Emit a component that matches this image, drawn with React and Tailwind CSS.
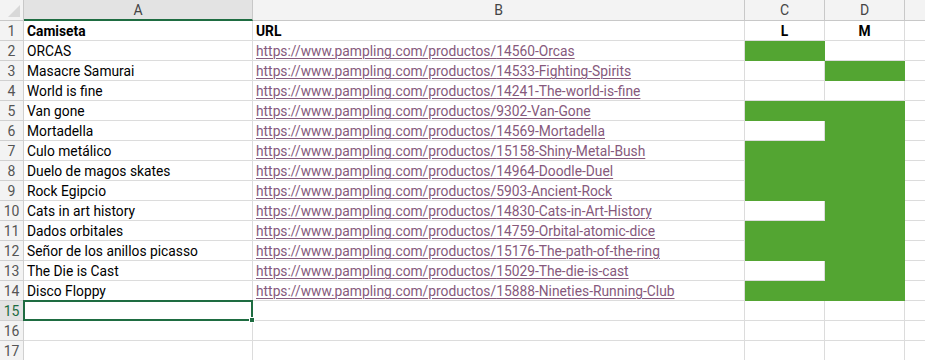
import React from 'react';

const rows = [
  ['ORCAS', '14560-Orcas', true, false],
  ['Masacre Samurai', '14533-Fighting-Spirits', false, true],
  ['World is fine', '14241-The-world-is-fine', false, false],
  ['Van gone', '9302-Van-Gone', true, true],
  ['Mortadella', '14569-Mortadella', false, true],
  ['Culo metálico', '15158-Shiny-Metal-Bush', true, true],
  ['Duelo de magos skates', '14964-Doodle-Duel', true, true],
  ['Rock Egipcio', '5903-Ancient-Rock', true, true],
  ['Cats in art history', '14830-Cats-in-Art-History', false, true],
  ['Dados orbitales', '14759-Orbital-atomic-dice', true, true],
  ['Señor de los anillos picasso', '15176-The-path-of-the-ring', true, true],
  ['The Die is Cast', '15029-The-die-is-cast', false, true],
  ['Disco Floppy', '15888-Nineties-Running-Club', true, true],
];

const cell = 'h-5 border-r border-b border-[#dcdcdc] px-[3px] flex items-end pb-[1px] leading-[16px] overflow-hidden whitespace-nowrap';
const rowHead = 'h-5 border-r border-b border-[#d0d0d0] bg-[#f3f3f3] text-[#555] flex items-end justify-center pb-[1px] leading-[16px] text-[14px]';
const colHead = 'h-[21px] border-r border-b border-[#c8c8c8] bg-[#f3f3f3] flex items-center justify-center text-[#444] text-[14px] leading-[16px]';

function Green({ on }) {
  return on ? (
    <div className="h-5 bg-[#53a532] border-r border-b border-[#53a532]" />
  ) : (
    <div className="h-5 border-r border-b border-[#dcdcdc]" />
  );
}

export default function App() {
  return (
    <div className="w-[925px] h-[360px] overflow-hidden bg-white text-[13.8px] text-black" style={{ fontFamily: 'Roboto, "Liberation Sans", sans-serif' }}>
      <div className="grid grid-cols-[24px_229px_492px_80px_80px_1fr]">
        {/* column headers */}
        <div className="h-[21px] border-r border-b border-[#c8c8c8] bg-[#f3f3f3] relative">
          <svg className="absolute right-[3px] bottom-[3px]" width="12" height="12" viewBox="0 0 12 12">
            <polygon points="12,0 12,12 0,12" fill="#d8d8d8" />
          </svg>
        </div>
        <div className="h-[21px] border-r border-[#c8c8c8] bg-[#e3e3e3] border-b-2 border-b-[#1e6c41] flex items-center justify-center text-[#444] text-[14px] leading-[16px]">A</div>
        <div className={colHead}>B</div>
        <div className={colHead}>C</div>
        <div className={colHead}>D</div>
        <div className="h-[21px] border-b border-[#c8c8c8] bg-[#f3f3f3]" />

        {/* row 1 */}
        <div className={rowHead}>1</div>
        <div className={cell + ' font-bold'}>Camiseta</div>
        <div className={cell + ' font-bold'}>URL</div>
        <div className={cell + ' font-bold justify-center'}>L</div>
        <div className={cell + ' font-bold justify-center'}>M</div>
        <div className="h-5 border-b border-[#dcdcdc]" />

        {rows.map(([name, slug, l, m], i) => (
          <React.Fragment key={slug}>
            <div className={rowHead}>{i + 2}</div>
            <div className={cell}>{name}</div>
            <div className={cell}>
              <span className="text-[#86597c] underline underline-offset-[2px] decoration-[1px]">
                https://www.pampling.com/productos/{slug}
              </span>
            </div>
            <Green on={l} />
            <Green on={m} />
            <div className="h-5 border-b border-[#dcdcdc]" />
          </React.Fragment>
        ))}

        {/* row 15 selected */}
        <div className="h-5 border-r border-b border-[#d0d0d0] bg-[#e3e3e3] text-[#1e6c41] flex items-end justify-center pb-[1px] leading-[16px] text-[14px]">15</div>
        <div className="h-5 border-r border-b border-[#dcdcdc] relative">
          <div className="absolute -left-[1px] -top-[1px] -right-[1px] -bottom-[1px] border-2 border-[#1e6c41]" />
          <div className="absolute -right-[3px] -bottom-[3px] w-[6px] h-[6px] bg-[#1e6c41] border border-white" />
        </div>
        <div className="h-5 border-r border-b border-[#dcdcdc]" />
        <div className="h-5 border-r border-b border-[#dcdcdc]" />
        <div className="h-5 border-r border-b border-[#dcdcdc]" />
        <div className="h-5 border-b border-[#dcdcdc]" />

        {[16, 17].map((n) => (
          <React.Fragment key={n}>
            <div className={rowHead}>{n}</div>
            <div className="h-5 border-r border-b border-[#dcdcdc]" />
            <div className="h-5 border-r border-b border-[#dcdcdc]" />
            <div className="h-5 border-r border-b border-[#dcdcdc]" />
            <div className="h-5 border-r border-b border-[#dcdcdc]" />
            <div className="h-5 border-b border-[#dcdcdc]" />
          </React.Fragment>
        ))}
      </div>
    </div>
  );
}
